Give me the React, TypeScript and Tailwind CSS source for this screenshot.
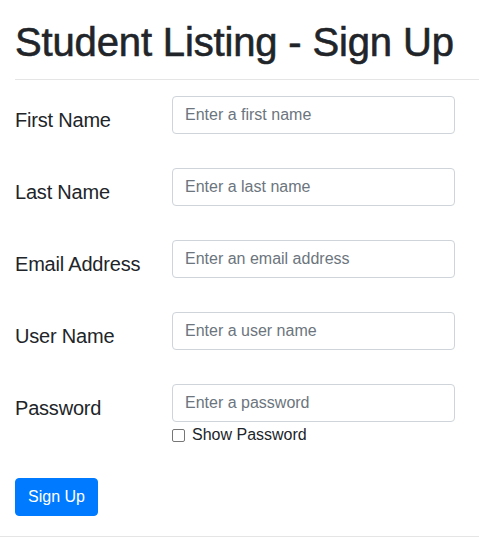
import { useState } from 'react';

type Field = {
  id: string;
  label: string;
  placeholder: string;
  type: string;
};

const fields: Field[] = [
  { id: 'firstName', label: 'First Name', placeholder: 'Enter a first name', type: 'text' },
  { id: 'lastName', label: 'Last Name', placeholder: 'Enter a last name', type: 'text' },
  { id: 'email', label: 'Email Address', placeholder: 'Enter an email address', type: 'email' },
  { id: 'userName', label: 'User Name', placeholder: 'Enter a user name', type: 'text' },
];

export default function App() {
  const [showPassword, setShowPassword] = useState(false);

  const inputClass =
    'block w-[283px] h-[38px] px-3 py-[6px] text-[16px] leading-6 text-[#495057] bg-white border border-[#ced4da] rounded-[4px] placeholder:text-[#6c757d] outline-none';

  return (
    <div className="min-h-screen bg-white text-[#212529] font-['Liberation_Sans',Arial,sans-serif]">
      <div className="pl-[15px] pt-[18px]">
        <h1 className="text-[40px] leading-[48px] font-medium tracking-[-0.15px] [-webkit-text-stroke:0.6px_#212529] mb-[13px]">
          Student Listing - Sign Up
        </h1>
        <hr className="border-0 border-t border-[#e5e5e5] mb-4" />

        <form onSubmit={(e) => e.preventDefault()}>
          {fields.map((f) => (
            <div key={f.id} className="flex mb-6">
              <label htmlFor={f.id} className="w-[157px] pt-[9px] pb-[9px] text-[20px] leading-[30px] tracking-[-0.2px]">
                {f.label}
              </label>
              <input id={f.id} type={f.type} placeholder={f.placeholder} className={inputClass} />
            </div>
          ))}

          {/* Password */}
          <div className="flex">
            <label htmlFor="password" className="w-[157px] pt-[9px] pb-[9px] text-[20px] leading-[30px] tracking-[-0.2px]">
              Password
            </label>
            <div>
              <input
                id="password"
                type={showPassword ? 'text' : 'password'}
                placeholder="Enter a password"
                className={inputClass}
              />
              <label className="flex items-center text-[16px] leading-6 mt-px">
                <input
                  type="checkbox"
                  checked={showPassword}
                  onChange={(e) => setShowPassword(e.target.checked)}
                  className="w-[13px] h-[13px] m-0 mr-[7px] appearance-none border border-[#767676] rounded-[2px] bg-white"
                />
                Show Password
              </label>
            </div>
          </div>

          <button
            type="submit"
            className="mt-[31px] h-[38px] px-3 text-[16px] leading-6 text-white bg-[#007bff] border border-[#007bff] rounded-[4px]"
          >
            Sign Up
          </button>
        </form>
      </div>
      <div className="mt-5 border-t border-[#e5e5e5]" />
    </div>
  );
}
